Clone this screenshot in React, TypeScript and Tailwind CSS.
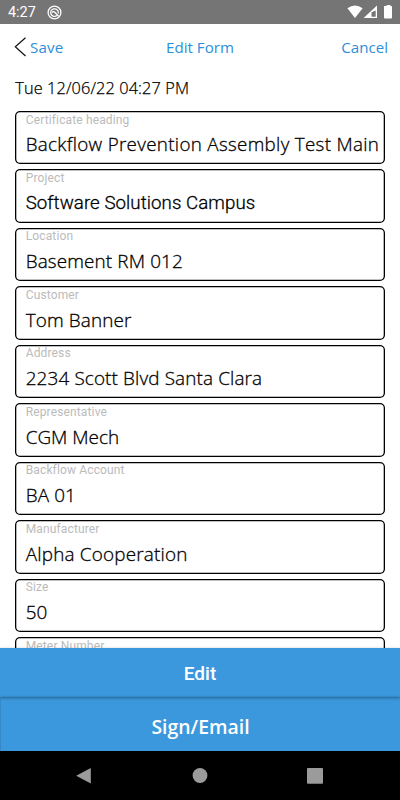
import React from "react";

type Field = { label: string; value: string; font?: string };

const fields: Field[] = [
  { label: "Certificate heading", value: "Backflow Prevention Assembly Test Main", font: "text-[18.8px] tracking-[0.32px]" },
  { label: "Project", value: "Software Solutions Campus", font: "font-['Roboto',sans-serif] text-[18.7px] tracking-[0.06px]" },
  { label: "Location", value: "Basement RM 012" },
  { label: "Customer", value: "Tom Banner" },
  { label: "Address", value: "2234 Scott Blvd Santa Clara" },
  { label: "Representative", value: "CGM Mech", font: "text-[18.9px]" },
  { label: "Backflow Account", value: "BA 01" },
  { label: "Manufacturer", value: "Alpha Cooperation", font: "text-[18.9px] tracking-[0.2px]" },
  { label: "Size", value: "50" },
  { label: "Meter Number", value: "" },
];

function StatusBar() {
  return (
    <div className="flex h-6 shrink-0 items-center bg-[#757575] pl-2 font-['Roboto',sans-serif] text-[14.4px] leading-6 text-white">
      <span className="w-[39px] pt-[2px]">4:27</span>
      <svg width="15" height="15" viewBox="0 0 15 15" fill="none" stroke="white">
        <circle cx="7.5" cy="7.5" r="6.4" strokeWidth="1.3" />
        <path d="M9.9 10.6A3.8 3.8 0 1 1 11.3 7.5V8.6" strokeWidth="1.3" />
        <path d="M5.2 7.6C5.9 6.4 7 6.5 7.8 7.3L11.6 11.2" strokeWidth="1.3" />
      </svg>
      <svg className="ml-auto" width="53" height="24" viewBox="0 0 53 24" fill="white">
        <path d="M0.4 8.2Q8 2.6 15.6 8.2L8 18Z" />
        <path fillRule="evenodd" d="M30 5.4V18H16.6ZM28.7 10.5L24.5 12.2V16.7H28.7Z" />
        <path d="M36.9 6H39.5V5.4Q39.5 5 40 5H43Q43.5 5 43.5 5.4V6H44.5Q45 6 45 7V17.5Q45 18.5 44.2 18.5H38Q37 18.5 37 17.5V7Z" />
      </svg>
    </div>
  );
}

function Header() {
  return (
    <header className="grid h-[46px] shrink-0 grid-cols-3 items-center px-3 text-[15.1px] leading-[20px] text-[#2c8fdb]">
      <div className="flex items-center">
        <svg width="18" height="20" viewBox="0 0 18 20" fill="none" stroke="#111" strokeWidth="1.2">
          <path d="M13.5 0.7L3.3 9.8L13.5 19" />
        </svg>
        <span className="tracking-[0.2px]">Save</span>
      </div>
      <span className="text-center">Edit Form</span>
      <span className="text-right">Cancel</span>
    </header>
  );
}

function FieldBox({ label, value, font }: Field) {
  return (
    <div className="mb-[5.2px] h-[53.3px] shrink-0 rounded-[5px] pr-[4px] pl-[10.4px] shadow-[inset_0_0_0_1.3px_#000]">
      <div className="h-[20.4px] pt-[1.5px] font-['Roboto',sans-serif] text-[12px] leading-[15px] tracking-[0.14px] text-[#bbbbbb]">{label}</div>
      <div className={`leading-[27px] font-light whitespace-nowrap text-black [-webkit-text-stroke:0.3px_#000] ${font ?? "text-[18.9px] tracking-[0.13px]"}`}>{value}</div>
    </div>
  );
}

export default function App() {
  return (
    <div className="flex h-[800px] w-[400px] flex-col overflow-hidden bg-white font-['Open_Sans',sans-serif]">
      <StatusBar />
      <Header />
      <main className="flex min-h-0 flex-1 flex-col overflow-hidden px-[15.3px] pt-[8px]">
        <div className="h-[33px] shrink-0 text-[16.3px] leading-[21px] font-light tracking-[0.12px] text-black [-webkit-text-stroke:0.25px_#000]">Tue 12/06/22 04:27 PM</div>
        {fields.map((f) => (
          <FieldBox key={f.label} {...f} />
        ))}
      </main>
      <div className="flex h-[103px] shrink-0 flex-col bg-[#3b98dd] text-[19.4px] font-semibold text-white">
        <button className="relative h-[49px] shrink-0 pt-[3px] font-['Roboto',sans-serif] text-[19px] font-medium shadow-[0_1px_3px_rgba(0,0,0,0.35)]">Edit</button>
        <button className="ml-px flex-1 pt-[5px] shadow-[0_0_2px_rgba(0,0,0,0.3)]">Sign/Email</button>
      </div>
      <nav className="flex h-[49px] shrink-0 items-center bg-black">
        <svg width="400" height="49" viewBox="0 0 400 49" fill="#9b9b9b">
          <path d="M90.8 17V32.5L76.2 24.8Z" />
          <circle cx="200" cy="24.5" r="7.4" />
          <rect x="307" y="17" width="16" height="15.7" rx="1" />
        </svg>
      </nav>
    </div>
  );
}
